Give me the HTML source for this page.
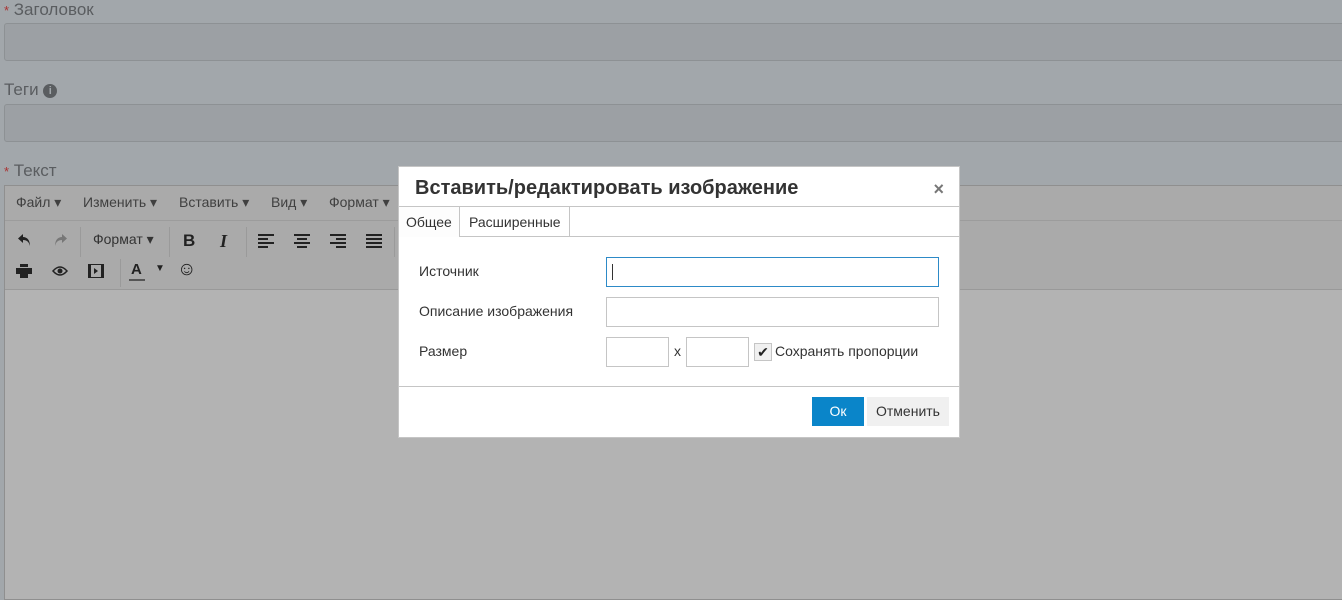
<!DOCTYPE html>
<html><head><meta charset="utf-8"><style>
*{box-sizing:border-box;margin:0;padding:0}
body{width:1342px;height:596px;overflow:hidden;background:#a2a7ab;font-family:"Liberation Sans",sans-serif;position:relative;color:#555}
.abs{position:absolute}
.lbl{font-size:17px;color:#5a5d60}
.req{color:#a33;font-size:13px}
.inp{background:#9ca0a4;border:1px solid #8d9194;border-radius:3px;left:4px;right:-10px;height:38px}
.ed{left:4px;top:185px;right:-4px;bottom:-4px;border:1px solid #8f8f8f;background:#b3b3b3}
.menu{height:35px;background:#aaa;border-bottom:1px solid #9c9c9c;font-size:14px;color:#404040}
.menu span{position:absolute;top:8px}
.tb{height:69px;background:#aaa;border-bottom:1px solid #999}
.ic{position:absolute;font-size:15px;color:#222}
.sep{position:absolute;width:1px;background:#9a9a9a}
.dlg{left:398px;top:166px;width:562px;height:272px;background:#fff;border:1px solid #c5c5c5}
.dlg .t{position:absolute;left:16px;top:10px;font-size:20px;font-weight:bold;color:#333}
.fl{position:absolute;left:20px;font-size:14px;color:#333}
.fi{position:absolute;border:1px solid #c5c5c5;background:#fff;height:30px}
svg.i{position:absolute}
</style></head><body>
<div class="abs lbl" style="left:4px;top:0px"><span class="req">*</span> Заголовок</div>
<div class="abs inp" style="top:23px"></div>
<div class="abs lbl" style="left:4px;top:80px">Теги <span style="display:inline-block;width:14px;height:14px;border-radius:50%;background:#5a5d60;color:#a2a7ab;font-size:11px;font-weight:bold;text-align:center;line-height:14px;vertical-align:1px">i</span></div>
<div class="abs inp" style="top:104px"></div>
<div class="abs lbl" style="left:4px;top:161px"><span class="req">*</span> Текст</div>
<div class="abs ed">
 <div class="menu" style="position:relative">
  <span style="left:11px">Файл ▾</span><span style="left:78px">Изменить ▾</span><span style="left:174px">Вставить ▾</span><span style="left:266px">Вид ▾</span><span style="left:324px">Формат ▾</span>
 </div>
 <div class="tb" style="position:relative">
  <svg class="i" style="left:12px;top:11px" width="16" height="16" viewBox="0 0 16 16"><path d="M6 2 L1 6.5 L6 11 V8 C10 8 12 10 13 14 C13 8 10 5 6 5Z" fill="#222"/></svg>
  <svg class="i" style="left:47px;top:11px" width="16" height="16" viewBox="0 0 16 16"><path d="M10 2 L15 6.5 L10 11 V8 C6 8 4 10 3 14 C3 8 6 5 10 5Z" fill="#777"/></svg>
  <div class="sep" style="left:75px;top:6px;height:30px"></div>
  <span class="ic" style="left:88px;top:10px;font-size:14px;color:#333">Формат ▾</span>
  <div class="sep" style="left:164px;top:6px;height:30px"></div>
  <span class="ic" style="left:178px;top:10px;font-weight:bold;font-size:17px">B</span>
  <span class="ic" style="left:215px;top:10px;font-style:italic;font-family:'Liberation Serif',serif;font-weight:bold;font-size:18px">I</span>
  <div class="sep" style="left:241px;top:6px;height:30px"></div>
  <svg class="i" style="left:253px;top:13px" width="16" height="14" viewBox="0 0 16 14" fill="#222"><rect x="0" y="0" width="16" height="2"/><rect x="0" y="4" width="10" height="2"/><rect x="0" y="8" width="16" height="2"/><rect x="0" y="12" width="10" height="2"/></svg>
  <svg class="i" style="left:289px;top:13px" width="16" height="14" viewBox="0 0 16 14" fill="#222"><rect x="0" y="0" width="16" height="2"/><rect x="3" y="4" width="10" height="2"/><rect x="0" y="8" width="16" height="2"/><rect x="3" y="12" width="10" height="2"/></svg>
  <svg class="i" style="left:325px;top:13px" width="16" height="14" viewBox="0 0 16 14" fill="#222"><rect x="0" y="0" width="16" height="2"/><rect x="6" y="4" width="10" height="2"/><rect x="0" y="8" width="16" height="2"/><rect x="6" y="12" width="10" height="2"/></svg>
  <svg class="i" style="left:361px;top:13px" width="16" height="14" viewBox="0 0 16 14" fill="#222"><rect x="0" y="0" width="16" height="2"/><rect x="0" y="4" width="16" height="2"/><rect x="0" y="8" width="16" height="2"/><rect x="0" y="12" width="16" height="2"/></svg>
  <div class="sep" style="left:389px;top:6px;height:30px"></div>
  <svg class="i" style="left:11px;top:43px" width="16" height="14" viewBox="0 0 16 14" fill="#222"><rect x="4" y="0" width="8" height="3"/><rect x="0" y="4" width="16" height="6"/><rect x="4" y="9" width="8" height="5"/></svg>
  <svg class="i" style="left:47px;top:44px" width="16" height="12" viewBox="0 0 16 12"><path d="M1 6 Q8 -2 15 6 Q8 14 1 6Z" fill="none" stroke="#222" stroke-width="1.5"/><circle cx="8" cy="6" r="2.5" fill="#222"/></svg>
  <svg class="i" style="left:83px;top:43px" width="16" height="14" viewBox="0 0 16 14"><rect x="0.5" y="0.5" width="15" height="13" fill="none" stroke="#222"/><rect x="0" y="0" width="3" height="14" fill="#222"/><rect x="13" y="0" width="3" height="14" fill="#222"/><path d="M6 4 L10 7 L6 10Z" fill="#222"/></svg>
  <div class="sep" style="left:115px;top:38px;height:28px"></div>
  <span class="ic" style="left:126px;top:40px;font-size:15px;font-weight:bold">A</span>
  <div style="position:absolute;left:124px;top:58px;width:16px;height:2px;background:#555"></div>
  <span class="ic" style="left:150px;top:42px;font-size:10px">▼</span>
  <span class="ic" style="left:172px;top:38px;font-size:19px">☺</span>
 </div>
</div>
<div class="abs dlg">
 <div class="t">Вставить/редактировать изображение</div>
 <div style="position:absolute;right:15px;top:12px;font-size:18px;color:#777;font-weight:bold">×</div>
 <div style="position:absolute;left:0;right:0;top:39px;border-top:1px solid #c5c5c5"></div>
 <div style="position:absolute;left:0;top:40px;width:61px;height:30px;background:#fdfdfd;border-right:1px solid #c5c5c5;font-size:14px;color:#333;padding:7px 0 0 7px">Общее</div>
 <div style="position:absolute;left:61px;top:40px;width:110px;height:30px;border-right:1px solid #c5c5c5;border-bottom:1px solid #c5c5c5;font-size:14px;color:#333;padding:7px 0 0 9px">Расширенные</div>
 <div style="position:absolute;left:171px;right:0;top:69px;border-top:1px solid #c5c5c5"></div>
 <div class="fl" style="top:96px">Источник</div>
 <div class="fi" style="left:207px;top:90px;width:333px;border-color:#2d8ac7"><div style="position:absolute;left:5px;top:6px;width:1px;height:16px;background:#333"></div></div>
 <div class="fl" style="top:136px">Описание изображения</div>
 <div class="fi" style="left:207px;top:130px;width:333px"></div>
 <div class="fl" style="top:176px">Размер</div>
 <div class="fi" style="left:207px;top:170px;width:63px"></div>
 <div class="fl" style="left:275px;top:176px">x</div>
 <div class="fi" style="left:287px;top:170px;width:63px"></div>
 <div style="position:absolute;left:355px;top:176px;width:18px;height:18px;border:1px solid #c5c5c5;background:#f0f0f0;font-size:14px;color:#222;text-align:center;line-height:16px">✔</div>
 <div class="fl" style="left:376px;top:176px">Сохранять пропорции</div>
 <div style="position:absolute;left:0;right:0;top:219px;border-top:1px solid #c5c5c5"></div>
 <div style="position:absolute;left:413px;top:230px;width:52px;height:29px;background:#0a85c9;color:#fff;font-size:14px;text-align:center;line-height:29px">Ок</div>
 <div style="position:absolute;left:468px;top:230px;width:82px;height:29px;background:#f0f0f0;color:#333;font-size:14px;text-align:center;line-height:29px">Отменить</div>
</div>
</body></html>
